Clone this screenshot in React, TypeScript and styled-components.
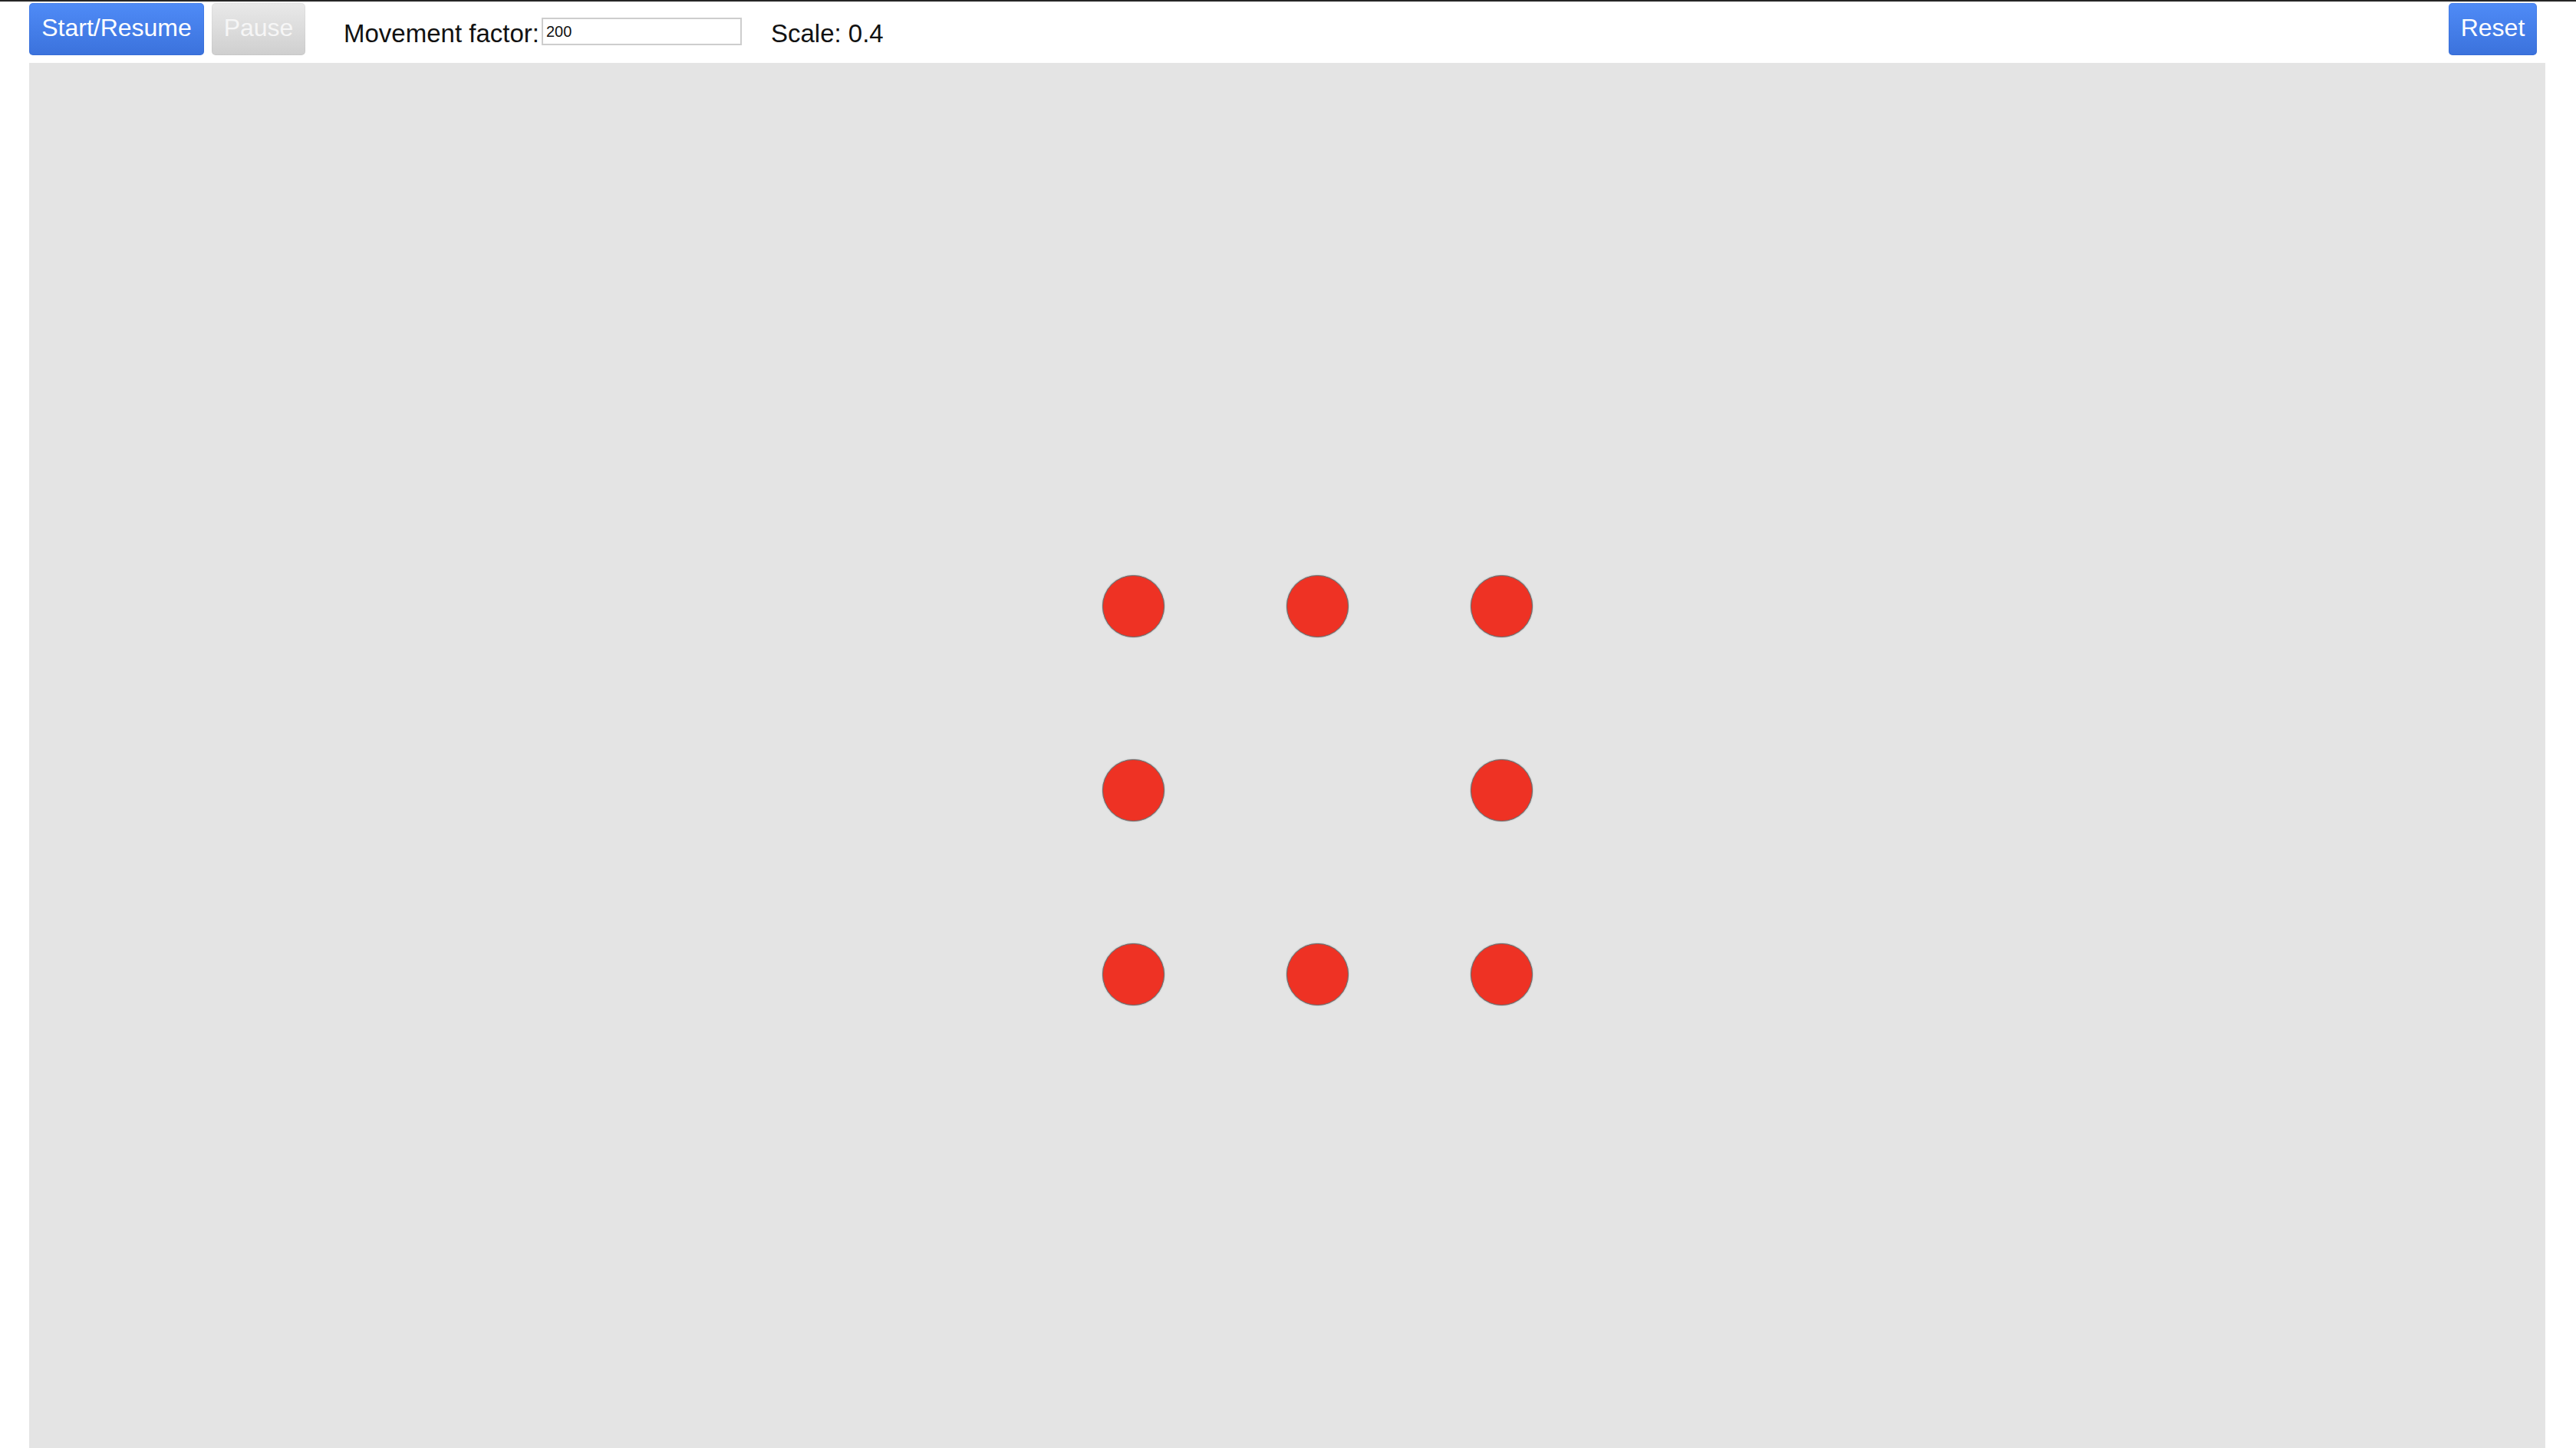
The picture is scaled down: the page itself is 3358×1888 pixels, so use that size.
import React from "react";
import styled, { createGlobalStyle } from "styled-components";

const GlobalStyle = createGlobalStyle`
  html, body {
    margin: 0;
    padding: 0;
    background: #ffffff;
    overflow: hidden;
  }
  body {
    font-family: "Liberation Sans", Arial, sans-serif;
  }
`;

const Page = styled.div`
  border-top: 2px solid #262626;
  padding: 0 40px 0 38px;
  height: 100vh;
  display: flex;
  flex-direction: column;
  box-sizing: border-box;
`;

const Toolbar = styled.div`
  display: flex;
  align-items: flex-start;
  padding: 2px 11px 0 0;
  height: 70px;
  margin-bottom: 10px;
  box-sizing: border-box;
`;

const Button = styled.button<{ $w: number; $disabled?: boolean }>`
  width: ${(p) => p.$w}px;
  height: 68px;
  margin-right: 10px;
  border: none;
  border-radius: 5px;
  padding: 0 0 3px;
  font-family: "Liberation Sans", Arial, sans-serif;
  font-size: 32px;
  color: ${(p) => (p.$disabled ? "#f6f6f6" : "#ffffff")};
  background: ${(p) =>
    p.$disabled
      ? "linear-gradient(#e9e9e9, #cfcfcf)"
      : "linear-gradient(#4f8bf7, #3b72dc)"};
  box-shadow: inset 0 0 0 1px
    ${(p) => (p.$disabled ? "rgba(0,0,0,0.03)" : "rgba(40,90,200,0.25)")};
  cursor: default;

  &:last-child {
    margin-right: 0;
  }
`;

const Field = styled.div`
  display: flex;
  align-items: flex-start;
  margin-left: 40px;
`;

const Label = styled.span`
  font-size: 33px;
  color: #111;
  padding-top: 21px;
  line-height: normal;
  white-space: nowrap;
`;

const Input = styled.input`
  width: 261px;
  height: 36px;
  margin: 19px 0 0 3px;
  box-sizing: border-box;
  border: 2px solid #cdcdcd;
  padding: 0 0 0 4px;
  font-family: "Liberation Sans", Arial, sans-serif;
  font-size: 20px;
  color: #111;
  outline: none;
`;

const ScaleText = styled(Label)`
  margin-left: 38px;
`;

const Spacer = styled.div`
  flex: 1;
`;

const Canvas = styled.div`
  position: relative;
  flex: 1;
  background: #e4e4e4;
  overflow: hidden;
`;

const Dot = styled.div`
  position: absolute;
  width: 81px;
  height: 81px;
  border-radius: 50%;
  background: #ee3224;
  box-sizing: border-box;
  border: 1.5px solid #6d6d6d;
  box-shadow: 0 0 1.5px rgba(40, 40, 40, 0.6);
`;

const xs = [1439.5, 1679.5, 1919.5];
const ys = [708, 948, 1188];
const dots: Array<[number, number]> = [];
ys.forEach((y, r) =>
  xs.forEach((x, c) => {
    if (!(r === 1 && c === 1)) dots.push([x, y]);
  })
);

export default function App() {
  return (
    <>
      <GlobalStyle />
      <Page>
        <Toolbar>
          <Button $w={228}>Start/Resume</Button>
          <Button $w={122} $disabled>
            Pause
          </Button>
          <Field>
            <Label>Movement factor:</Label>
            <Input defaultValue="200" />
            <ScaleText>Scale: 0.4</ScaleText>
          </Field>
          <Spacer />
          <Button $w={115}>Reset</Button>
        </Toolbar>
        <Canvas>
          {dots.map(([x, y], i) => (
            <Dot key={i} style={{ left: x - 40.5, top: y - 40.5 }} />
          ))}
        </Canvas>
      </Page>
    </>
  );
}
